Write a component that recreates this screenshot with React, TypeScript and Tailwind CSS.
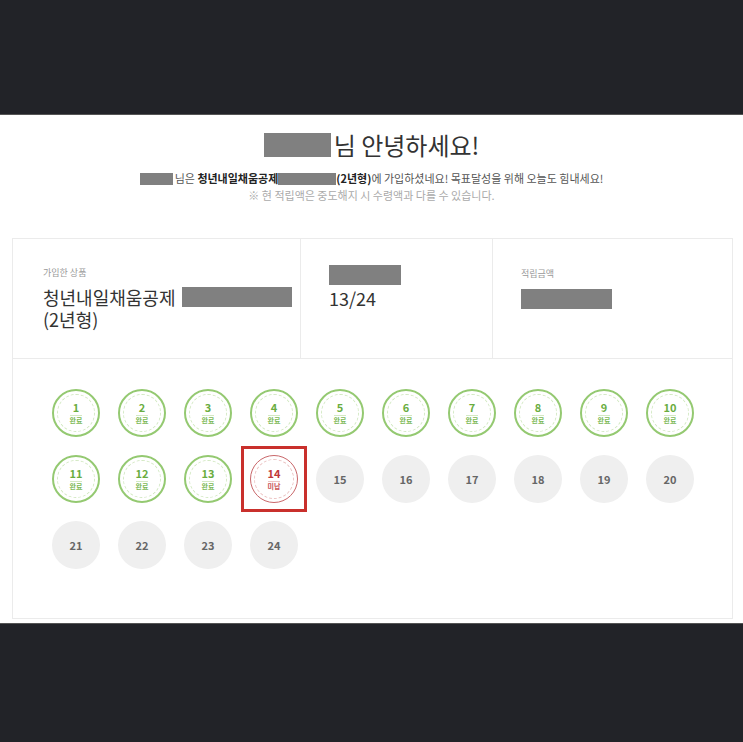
const FONT = { fontFamily: '"Noto Sans CJK KR", "Noto Sans", sans-serif' };

function Redact({ className }: { className: string }) {
  return <span className={`inline-block bg-[#808080] align-middle ${className}`} />;
}

function Round({ n }: { n: number }) {
  if (n <= 13) {
    return (
      <div className="relative w-[48px] h-[48px] rounded-full border-2 border-[#94c971] flex flex-col items-center justify-center">
        <div className="absolute inset-[3px] rounded-full border border-dashed border-[#d3e9c3]" />
        <span className="text-[11px] font-bold leading-[13px] text-[#6aad3f]">{n}</span>
        <span className="mt-[1px] text-[7px] font-bold leading-[9px] text-[#7cb956] border-t border-[#d3e9c3]">완료</span>
      </div>
    );
  }
  if (n === 14) {
    return (
      <div className="relative w-[48px] h-[48px]">
        <div className="absolute -inset-[9px] border-[3px] border-[#c9302c]" />
        <div className="relative w-[48px] h-[48px] rounded-full border-[1.5px] border-[#c9676a] flex flex-col items-center justify-center">
          <div className="absolute inset-[3px] rounded-full border border-dashed border-[#ecc4c4]" />
          <span className="text-[11px] font-bold leading-[13px] text-[#c1393a]">{n}</span>
          <span className="mt-[1px] text-[7px] font-bold leading-[9px] text-[#c95658] border-t border-[#ecc4c4]">미납</span>
        </div>
      </div>
    );
  }
  return (
    <div className="w-[48px] h-[48px] rounded-full bg-[#efefef] flex items-center justify-center">
      <span className="text-[11px] font-bold text-[#666666]">{n}</span>
    </div>
  );
}

export default function App() {
  const rounds = Array.from({ length: 24 }, (_, i) => i + 1);

  return (
    <div className="w-[743px] h-[742px] flex flex-col bg-[#222328]" style={FONT}>
      <div className="h-[115px] shrink-0 border-b border-[#555]" />

      {/* white panel */}
      <div className="h-[508px] shrink-0 bg-white flex flex-col items-center pt-[16px]">
        <h1 className="flex items-center gap-[3px] text-[24px] leading-[28px] text-[#333] font-normal">
          <Redact className="w-[67px] h-[24px]" />
          <span>님 안녕하세요!</span>
        </h1>
        <p className="mt-[12px] flex items-center text-[11px] leading-[15px] text-[#555]">
          <Redact className="w-[33px] h-[12px]" />
          <span className="ml-[2px]">님은&nbsp;</span>
          <b className="text-[#222]">청년내일채움공제</b>
          <Redact className="w-[58px] h-[12px]" />
          <b className="text-[#222]">(2년형)</b>
          <span>에 가입하셨네요! 목표달성을 위해 오늘도 힘내세요!</span>
        </p>
        <p className="mt-[2px] text-[11px] leading-[15px] text-[#aaaaaa]">
          ※ 현 적립액은 중도해지 시 수령액과 다를 수 있습니다.
        </p>

        {/* card */}
        <div className="mt-[35px] self-start ml-[12px] w-[721px] h-[381px] border border-[#ebebeb] flex flex-col">
          <div className="h-[120px] flex border-b border-[#ebebeb]">
            <div className="w-[288px] border-r border-[#ebebeb] pl-[30px] pt-[28px]">
              <div className="text-[9px] leading-[12px] text-[#999]">가입한 상품</div>
              <div className="mt-[7px] text-[18px] leading-[22px] text-[#333]">
                <div className="flex items-center gap-[7px]">
                  <span>청년내일채움공제</span>
                  <Redact className="w-[110px] h-[20px]" />
                </div>
                <div>(2년형)</div>
              </div>
            </div>
            <div className="w-[192px] border-r border-[#ebebeb] pl-[28px] pt-[21px]">
              <Redact className="w-[72px] h-[20px]" />
              <div className="mt-[2px] text-[18px] leading-[22px] text-[#333]">13/24</div>
            </div>
            <div className="flex-1 pl-[28px] pt-[29px]">
              <div className="text-[9px] leading-[12px] text-[#999]">적립금액</div>
              <Redact className="mt-[9px] w-[91px] h-[20px]" />
            </div>
          </div>

          <div className="pl-[39px] pt-[30px] grid grid-cols-[repeat(10,48px)] gap-x-[18px] gap-y-[18px]">
            {rounds.map(n => (
              <Round key={n} n={n} />
            ))}
          </div>
        </div>
      </div>

      <div className="flex-1 border-t border-[#555]" />
    </div>
  );
}
